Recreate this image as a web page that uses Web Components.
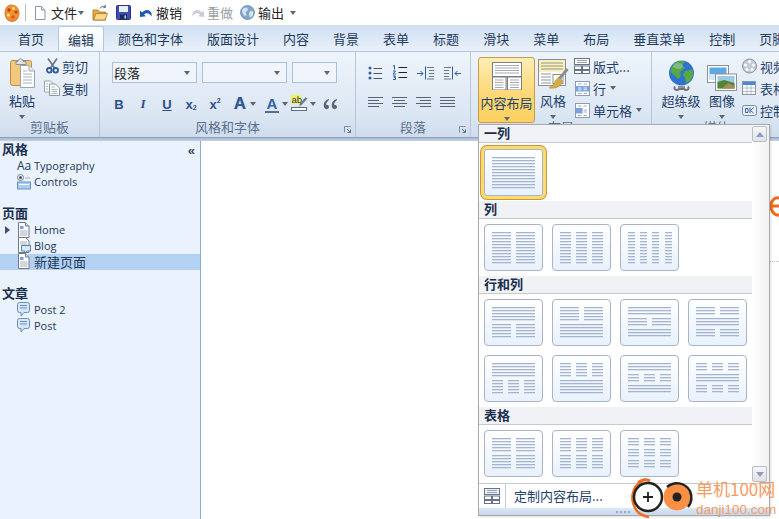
<!DOCTYPE html>
<html lang="zh"><head><meta charset="utf-8"><title>Layout</title>
<style>
html,body{margin:0;padding:0;width:779px;height:519px;overflow:hidden;background:#fff}
body{font:13px "Noto Sans CJK SC","Noto Sans",sans-serif;color:#1e395b}
</style></head><body>
<app-shell></app-shell>
<script>
const ICONS={
logo:[16,20,'<path d="M7 2C3 2 1 6 1 10.500C1 15 4 18.500 8 18.500C12 18.500 15 15 15 10C15 5.500 12 2 7 2Z" fill="#f0922e" stroke="#b8651c" stroke-width=".7"/><circle cx="5" cy="7" r="1.700" fill="#d8301e"/><circle cx="9.500" cy="5.500" r="1.500" fill="#fbe36a"/><circle cx="12" cy="9" r="1.600" fill="#d8301e"/><circle cx="4.500" cy="12" r="1.600" fill="#fbe36a"/><circle cx="9" cy="14" r="1.800" fill="#e4551f"/>'],
doc:[12,16,'<path d="M1.500 1.500H7.500L11 5V14.500H1.500Z" fill="#fff" stroke="#8b97a8"/><path d="M7.500 1.500V5H11" fill="#e3e8ef" stroke="#8b97a8"/>'],
folder:[16,18,'<path d="M1 16V6H6L7.500 8H13.500V16Z" fill="#e8a93e" stroke="#a9731e" stroke-width=".8"/><path d="M1.500 16L4 9.500H15.500L13 16Z" fill="#fbd98b" stroke="#a9731e" stroke-width=".8"/><path d="M8 4.500C9 2.500 11 2 13 2.800M13 .8L13.600 3.200L11.200 3.800" fill="none" stroke="#5f6d82" stroke-width="1"/>'],
save:[15,15,'<rect x=".5" y=".5" width="14" height="14" rx="1" fill="#3f4fb4" stroke="#2a347f"/><rect x="3" y="1" width="9" height="6" fill="#e9edf8"/><rect x="4" y="9.500" width="7" height="5" fill="#20295f"/><rect x="8.500" y="10.500" width="1.500" height="3" fill="#cfd6ee"/>'],
undo:[14,11,'<path d="M3 5.500C6 2 11 2 12.500 6.500C12.800 7.500 12.700 8.500 12.300 9.500C11.500 6.500 7.500 4.800 5 7.500L7 9.200L1 10V3.500L3 5.500Z" fill="#1d59ad"/>'],
redo:[14,11,'<path d="M11 5.500C8 2 3 2 1.500 6.500C1.200 7.500 1.300 8.500 1.700 9.500C2.500 6.500 6.500 4.800 9 7.500L7 9.200L13 10V3.500L11 5.500Z" fill="#c9ced5"/>'],
globeS:[15,15,'<circle cx="7.500" cy="7.500" r="7" fill="#7fa7cf" stroke="#687f9c" stroke-width=".7"/><path d="M3 3.500L7 2.500L8 5L5.500 7L6.500 10L4.500 11L2 7ZM10 6L13.500 6.500L12.500 11L10 12.500L9 9Z" fill="#dbe5ee"/>'],
paste:[25,31,'<rect x=".5" y="3.500" width="21" height="25" rx="2" fill="#f4c87c" stroke="#b98d4e"/><path d="M6 4.500H8C8 1 13 1 13 4.500H16V7.500H6Z" fill="#dfe3e7" stroke="#8a8f97"/><path d="M10.500 8.500H19L24.500 14V30.500H10.500Z" fill="#fff" stroke="#9aa3ae"/><path d="M19 8.500V14H24.500" fill="#e6eaee" stroke="#9aa3ae"/><path d="M13 14H17M13 17H22M13 20H22M13 23H22M13 26H22" stroke="#aab2bd"/>'],
scissors:[13,16,'<path d="M2 .5L8.500 10M11 .5L4.500 10" stroke="#6d7786" stroke-width="1.700"/><circle cx="3.300" cy="12.300" r="2.300" fill="none" stroke="#2c5aa0" stroke-width="1.800"/><circle cx="9.700" cy="12.300" r="2.300" fill="none" stroke="#2c5aa0" stroke-width="1.800"/>'],
copy:[16,16,'<path d="M.5 1H6.500L9.500 4V12H.5Z" fill="#fff" stroke="#98a1ad"/><path d="M5.500 4H11.500L15.500 8V15.500H5.500Z" fill="#fff" stroke="#8d96a3"/><path d="M7.500 7H11M7.500 9.500H13.500M7.500 11.500H13.500M7.500 13.500H13.500M2 4H4M2 6.500H4M2 9H4" stroke="#aeb5bf"/>'],
bullets:[14,14,'<circle cx="2" cy="2" r="1.500" fill="#2d5da8"/><circle cx="2" cy="7" r="1.500" fill="#2d5da8"/><circle cx="2" cy="12" r="1.500" fill="#2d5da8"/><path d="M5.500 2.500H14M5.500 7.500H14M5.500 12.500H14" stroke="#4a5668"/>'],
numbers:[15,15,'<path d="M6.500 2.500H15M6.500 7.500H15M6.500 12.500H15" stroke="#222"/><path d="M1 1L2.500 .5V4.500M1 6H3.500L1 9H4M1 11H3.500L2 12.500H3.500V14.500H1" fill="none" stroke="#2d5da8"/>'],
outdent:[17,14,'<path d="M8.500 .5V13.500" stroke="#2d5da8"/><path d="M0 7.500H6M3.500 5L6 7.500L3.500 10" fill="none" stroke="#2d5da8"/><path d="M10 1.500H17M12 4.500H17M12 7.500H17M12 10.500H17M10 13H17" stroke="#6d7686"/>'],
indent:[17,14,'<path d="M8.500 .5V13.500" stroke="#2d5da8"/><path d="M11 7.500H17M13.500 5L11 7.500L13.500 10" fill="none" stroke="#2d5da8"/><path d="M0 1.500H7M0 4.500H5M0 7.500H5M0 10.500H5M0 13H7" stroke="#6d7686"/>'],
alignL:[15,11,'<path d="M0 .5H15M0 3.500H11M0 6.500H15M0 9.500H11" stroke="#56647a" stroke-width="1.100"/>'],
alignC:[15,11,'<path d="M0 .5H15M2 3.500H13M0 6.500H15M2 9.500H13" stroke="#56647a" stroke-width="1.100"/>'],
alignR:[15,11,'<path d="M0 .5H15M4 3.500H15M0 6.500H15M4 9.500H15" stroke="#56647a" stroke-width="1.100"/>'],
alignJ:[15,11,'<path d="M0 .5H15M0 3.500H15M0 6.500H15M0 9.500H15" stroke="#56647a" stroke-width="1.100"/>'],
quote:[15,11,'<path d="M6 0C2 1 0 4 1 8C1.500 10.500 5 11 6 8.500C6.500 6.500 4 5 3 6C3 4 4.500 2 6 1ZM14 0C10 1 8 4 9 8C9.500 10.500 13 11 14 8.500C14.500 6.500 12 5 11 6C11 4 12.500 2 14 1Z" fill="#5a6778"/>'],
launch:[7,7,'<path d="M.5 6.500V.5H6.500" fill="none" stroke="#8090a6"/><path d="M3 3L6.500 6.500M6.500 3.500V6.500H3.500" fill="none" stroke="#5e7391"/>'],
bigLayout:[30,28,'<rect x=".5" y=".5" width="29" height="14" fill="#fff" stroke="#7c7f86"/><rect x=".5" y="15" width="13.500" height="13" fill="#fff" stroke="#7c7f86"/><rect x="15.500" y="15" width="14" height="13" fill="#fff" stroke="#7c7f86"/><path d="M3 3.500H27M3 6H27M3 8.500H27M3 11H27M3 18H11.500M3 20.500H11.500M3 23H11.500M3 25.500H11.500M18 18H27M18 20.500H27M18 23H27M18 25.500H27" stroke="#a5a9b2"/>'],
style:[31,32,'<rect x=".5" y=".5" width="27" height="26" fill="#fff" stroke="#8a8d93"/><rect x="1" y="1" width="26" height="12" fill="#fbf0b5"/><path d="M3 4H25M3 7H25M3 10H25M3 15H13M3 18H13M3 21H13M3 24H13" stroke="#8f959e"/><rect x="15" y="15.500" width="10" height="9" fill="#fff" stroke="#8a8d93"/><path d="M29.500 10L21 20" stroke="#8a8d93" stroke-width="3"/><path d="M21 19C16 20 18 25 11 29C18 30 25 27 24 21Z" fill="#d6ad45" stroke="#a98226" stroke-width=".5"/>'],
fmt:[16,16,'<rect x=".5" y=".5" width="15" height="6" fill="#fff" stroke="#677488"/><rect x=".5" y="8" width="7" height="3.500" fill="#fff" stroke="#677488"/><rect x="8.500" y="8" width="7" height="3.500" fill="#fff" stroke="#677488"/><rect x=".5" y="12.500" width="7" height="3" fill="#fff" stroke="#677488"/><rect x="8.500" y="12.500" width="7" height="3" fill="#fff" stroke="#677488"/><path d="M3 2.500H13M3 4.500H13" stroke="#9aa3b1"/>'],
row:[15,15,'<rect x=".5" y=".5" width="14" height="14" fill="#fff" stroke="#8f9db3"/><rect x="1" y="5" width="13" height="5.500" fill="#7da0df"/><path d="M3 7H6.500M8.500 7H12M3 8.800H6.500M8.500 8.800H12" stroke="#e6edfa"/><path d="M3 3H6.500M8.500 3H12M3 12.500H6.500M8.500 12.500H12" stroke="#a3aebf"/>'],
cell:[15,15,'<rect x=".5" y=".5" width="14" height="14" fill="#fff" stroke="#8f9db3"/><rect x="1" y="5" width="6.500" height="5.500" fill="#7da0df"/><path d="M3 3H6.500M8.500 3H12M8.500 7H12M8.500 9H12M3 12.500H6.500M8.500 12.500H12" stroke="#a3aebf"/>'],
globe:[27,31,'<path d="M7 26.500C5 29.500 9 31 11 29L16 29C18 31 22 29.500 20 26.500" fill="none" stroke="#6d7078" stroke-width="2"/><path d="M10 27H17" stroke="#8d9097" stroke-width="2"/><circle cx="13.500" cy="13" r="12.500" fill="#2f73cf"/><path d="M5 5C8 1 14 0 17 2L14 5L17 8L12 12L13 16L10 19L6 15L2.500 12C2.500 9 3.500 7 5 5ZM17 11L24 9.500C26 13 25 18 22 21L18 23L17 18L15 15Z" fill="#58a843"/><ellipse cx="10" cy="6" rx="5" ry="3" fill="#bfe0ff" opacity=".35"/>'],
image:[30,26,'<rect x=".5" y=".5" width="21" height="17" fill="#fff" stroke="#8b9099"/><rect x="2.500" y="2.500" width="17" height="12" fill="#5da8e4"/><rect x="2.500" y="9" width="17" height="6" fill="#d2e7f7"/><rect x="8.500" y="9" width="21" height="16.500" fill="#fff" stroke="#8b9099"/><rect x="10.500" y="11" width="17" height="12.500" fill="#9cc9e6"/><path d="M10.500 17L17 15L27.500 18V23.500H10.500Z" fill="#4f8537"/><path d="M15 23.500L21 18L27.500 21V23.500Z" fill="#a58e4f"/>'],
film:[15,16,'<circle cx="7.500" cy="8" r="7" fill="#c6ccd5" stroke="#8a929e"/><circle cx="7.500" cy="3.800" r="1.500" fill="#fff"/><circle cx="3.500" cy="7" r="1.500" fill="#fff"/><circle cx="11.500" cy="7" r="1.500" fill="#fff"/><circle cx="5" cy="11.500" r="1.500" fill="#fff"/><circle cx="10" cy="11.500" r="1.500" fill="#fff"/>'],
table:[14,14,'<rect x=".5" y=".5" width="13" height="13" fill="#fff" stroke="#8b96a8"/><rect x="1" y="1" width="12" height="3" fill="#4b88d8"/><path d="M1 7H13M1 10.500H13M5 4V13M9 4V13" stroke="#b3bccb"/>'],
ok:[15,11,'<rect x=".5" y=".5" width="14" height="10" rx="2" fill="#e8eef7" stroke="#7a8ba5"/><path d="M3.500 3.500H6V7.500H3.500ZM8 2.500V8M11.500 2.500L8.500 5.500L11.500 8" fill="none" stroke="#3f66a0"/>'],
treeDoc:[13,16,'<path d="M1.500 .5H8.500L12 4V15.500H1.500Z" fill="#fff" stroke="#6e7889"/><path d="M8.500 .5V4H12" fill="#dfe4ec" stroke="#6e7889"/><rect x="3" y="4" width="3.500" height="3" fill="#7da0df"/><path d="M3 9H10.500M3 11H10.500M3 13H10.500" stroke="#a5adba"/>'],
blog:[15,17,'<path d="M1.500 .5H8.500L12 4V15.500H1.500Z" fill="#fff" stroke="#6e7889"/><path d="M3 5H10M3 7H10" stroke="#a5adba"/><path d="M4.500 8.500H13.500V14H10L7.500 16.500V14H4.500Z" fill="#dbe8f8" stroke="#5a7fb2"/>'],
post:[13,15,'<path d="M.5 2.500Q.5 .5 2.500 .5H10.500Q12.500 .5 12.500 2.500V8.500Q12.500 10.500 10.500 10.500H7L4 14V10.500H2.500Q.5 10.500 .5 8.500Z" fill="#d7e6f8" stroke="#6d8fbe"/><path d="M3 3.500H10M3 6H10" stroke="#6d8fbe"/>'],
controls:[14,16,'<circle cx="3.500" cy="3.500" r="3" fill="#fff" stroke="#6e7889"/><circle cx="3.500" cy="3.500" r="1.500" fill="#44536b"/><path d="M8 4H13" stroke="#a8b0bc"/><rect x=".5" y="8" width="13" height="7" fill="#a6cdf2" stroke="#6e92bd"/><path d="M2 10.500H12" stroke="#fff"/>'],
footer:[16,16,'<rect x=".5" y=".5" width="15" height="6" fill="#eef2f8" stroke="#677488"/><rect x=".5" y="8" width="7" height="3.500" fill="#fff" stroke="#677488"/><rect x="8.500" y="8" width="7" height="3.500" fill="#fff" stroke="#677488"/><rect x=".5" y="12.500" width="7" height="3" fill="#fff" stroke="#677488"/><rect x="8.500" y="12.500" width="7" height="3" fill="#fff" stroke="#677488"/><path d="M3 2.500H13M3 4.500H13" stroke="#9aa3b1"/>']
};
function def(name,css,html,ready){
  customElements.define(name,class extends HTMLElement{
    connectedCallback(){
      if(this.shadowRoot)return;
      const s=this.attachShadow({mode:'open'});
      s.innerHTML='<style>'+css+'</style>'+(typeof html==='function'?html(this):html);
      if(ready)ready(this,s);
    }
  });
}
def('ui-icon',':host{display:inline-flex;flex:none}svg{display:block}',h=>{
  const [w,ht,p]=ICONS[h.getAttribute('name')];
  return `<svg xmlns="http://www.w3.org/2000/svg" width="${w}" height="${ht}" viewBox="0 0 ${w} ${ht}">${p}</svg>`;
});
def('ui-caret',':host{display:inline-block;flex:none;width:0;height:0;border:3.500px solid transparent;border-top:4px solid #5b6675;border-bottom:0;margin-left:var(--m,3px)}','');

def('qa-bar',`:host{display:flex;align-items:center;height:25px;background:#fff;flex:none;padding-left:4px;color:#222;white-space:nowrap}
.sep{width:1px;height:17px;background:#b7bdc6;margin:0 8px 0 5px}
.t{margin-left:4px}.g{color:#9a9fa6}`,`
<ui-icon name="logo"></ui-icon><span class="sep"></span>
<ui-icon name="doc"></ui-icon><span class="t" style="margin-left:5px">文件</span><ui-caret style="--m:1px"></ui-caret>
<ui-icon name="folder" style="margin-left:8px"></ui-icon>
<ui-icon name="save" style="margin-left:8px"></ui-icon>
<ui-icon name="undo" style="margin-left:8px"></ui-icon><span class="t" style="margin-left:3px">撤销</span>
<ui-icon name="redo" style="margin-left:9px"></ui-icon><span class="t g" style="margin-left:2px">重做</span>
<ui-icon name="globeS" style="margin-left:7px"></ui-icon><span class="t" style="margin-left:3px">输出</span><ui-caret style="--m:6px"></ui-caret>`);

def('ribbon-tabs',`:host{display:flex;height:27px;flex:none;padding-left:6px;background:linear-gradient(#cfdff0,#e9f1fb);white-space:nowrap;overflow:hidden;box-sizing:border-box;border-bottom:1px solid #b6c8dd}
span{padding:0 12px;line-height:27px;color:#1f3a5d;flex:none}
.a{position:relative;z-index:1;height:27px;box-sizing:border-box;margin:1px 2px -1px 2px;padding:0 9px;border:1px solid #b6c8dd;border-bottom:0;border-radius:3px 3px 0 0;background:linear-gradient(#fff,#eef4fc);line-height:26px}`,
h=>'首页 编辑 颜色和字体 版面设计 内容 背景 表单 标题 滑块 菜单 布局 垂直菜单 控制 页脚'.split(' ').map((t,i)=>`<span class="${i==1?'a':''}">${t}</span>`).join(''));

def('ribbon-group',`:host{display:flex;flex-direction:column;flex:none;box-sizing:border-box;border-right:1px solid #b7c7da;height:85px;position:relative}
.b{flex:1;min-height:0;display:flex}
.l{height:20px;line-height:19px;text-align:center;color:#5b708d;font-size:13px}
ui-icon{position:absolute;right:4px;bottom:4px}`,
h=>`<div class="b"><slot></slot></div><div class="l">${h.getAttribute('label')}</div>${h.hasAttribute('launch')?'<ui-icon name="launch"></ui-icon>':''}`);

def('big-btn',`:host{display:flex;flex-direction:column;align-items:center;flex:none;box-sizing:border-box;height:var(--h,66px);color:#24406a;line-height:18px}
.i{height:var(--ih,32px);display:flex;align-items:flex-end;justify-content:center;margin-top:var(--it,3px)}
.t{margin-top:var(--tt,2px);white-space:nowrap}
ui-caret{margin:5px 0 0}
:host([active]){background:linear-gradient(#fdeeb4,#fdd878 55%,#fbd15f);border:1px solid #c89b4c;border-radius:3px;margin-top:-1px}`,
h=>`<div class="i"><ui-icon name="${h.getAttribute('icon')}"></ui-icon></div><div class="t"><slot></slot></div><ui-caret></ui-caret>`);

def('small-btn',`:host{display:flex;align-items:center;height:22px;white-space:nowrap;color:#24406a;flex:none}
.i{width:var(--iw,16px);display:flex;justify-content:center;margin-right:var(--im,3px)}
ui-caret{--m:4px}`,
h=>`<span class="i"><ui-icon name="${h.getAttribute('icon')}"></ui-icon></span><slot></slot>${h.hasAttribute('caret')?'<ui-caret></ui-caret>':''}`);

def('combo-box',`:host{display:flex;align-items:center;justify-content:space-between;box-sizing:border-box;height:21px;border:1px solid #abc0dc;background:#f0f5fb;padding:0 6px 0 1px;color:#1a1a1a;flex:none}`,
`<span><slot></slot></span><ui-caret></ui-caret>`);

def('font-tool',`:host{display:inline-flex;align-items:center;justify-content:center;flex:none;width:24px;height:18px;color:#2c4f8c;font:bold 13px "Liberation Sans",sans-serif}
::slotted(small){font-size:7px;position:relative}`,`<slot></slot>`);

def('ribbon-bar',`:host{display:flex;height:85px;flex:none;background:linear-gradient(#eef4fb,#dbe6f3 75%,#cfdced);overflow:hidden}
.pa{display:flex;padding:5px 0 0 9px;gap:9px}
.sm{display:flex;flex-direction:column;margin-top:-2px;--im:2px}
.f{padding:10px 0 0 12px;flex-direction:column;display:flex;gap:12px}
.r{display:flex;gap:5px}
.tl{display:flex;align-items:center;margin-left:-5px}
.p{display:flex;flex-direction:column;padding:13px 0 0 12px;gap:17px}
.p .a{display:flex;gap:10px;align-items:center;height:15px}
.p .c{display:flex;gap:9px;align-items:center;height:11px}
.lay{display:flex;padding-top:6px;padding-left:7px}
.rs{margin-top:-3px;padding-left:4px;display:flex;flex-direction:column}
.hl{display:block;flex:none;margin:-2px 0 0 3px}`,`
<ribbon-group label="剪贴板" style="width:100px"><div class="pa">
  <big-btn icon="paste" style="--ih:31px;--it:0;--tt:4px"><span style="display:block;width:26px">粘贴</span></big-btn>
  <div class="sm"><small-btn icon="scissors">剪切</small-btn><small-btn icon="copy">复制</small-btn></div>
</div></ribbon-group>
<ribbon-group label="风格和字体" launch style="width:256px"><div class="f">
  <div class="r"><combo-box style="width:85px">段落</combo-box><combo-box style="width:85px"></combo-box><combo-box style="width:45px"></combo-box></div>
  <div class="r tl" style="gap:0;padding-left:0">
    <font-tool>B</font-tool><font-tool style="font-style:italic;font-family:'Liberation Serif',serif">I</font-tool><font-tool style="text-decoration:underline">U</font-tool>
    <font-tool>x<small style="top:3px">2</small></font-tool><font-tool>x<small style="top:-4px">2</small></font-tool>
    <font-tool style="width:18px;margin-left:4px;font-size:17px;color:#2f5597;text-shadow:0 0 1px #8aa">A</font-tool><ui-caret style="--m:1px"></ui-caret>
    <font-tool style="margin-left:9px;font-size:15px;border-bottom:2px solid #566d8f;height:15px;color:#2f5fa5;width:14px">A</font-tool><ui-caret style="--m:3px"></ui-caret>
    <svg class="hl" width="17" height="16" viewBox="0 0 17 16"><rect width="10" height="9" fill="#f3ee5c"/><text x=".5" y="7.500" font-family="Liberation Sans" font-size="9.500" fill="#2a3a55">ab</text><path d="M15.500 3L9 10" stroke="#6d7b90" stroke-width="2.500"/><path d="M9 10L7 12.500L10 11" fill="#c9a24a"/><rect x=".5" y="12.500" width="15" height="3" fill="#fff" stroke="#566d8f"/></svg><ui-caret style="--m:2px"></ui-caret>
    <ui-icon name="quote" style="margin-left:7px"></ui-icon>
  </div>
</div></ribbon-group>
<ribbon-group label="段落" launch style="width:115px"><div class="p">
  <div class="a"><ui-icon name="bullets"></ui-icon><ui-icon name="numbers"></ui-icon><ui-icon name="outdent"></ui-icon><ui-icon name="indent"></ui-icon></div>
  <div class="c"><ui-icon name="alignL"></ui-icon><ui-icon name="alignC"></ui-icon><ui-icon name="alignR"></ui-icon><ui-icon name="alignJ"></ui-icon></div>
</div></ribbon-group>
<ribbon-group label="布局" style="width:181px"><div class="lay">
  <big-btn active icon="bigLayout" style="width:57px;--ih:30px;--it:2px;--tt:4px">内容布局</big-btn>
  <big-btn icon="style" style="width:34px;margin-left:1px;--ih:32px;--it:1px;--tt:1px">风格</big-btn>
  <div class="rs"><small-btn icon="fmt">版式...</small-btn><small-btn icon="row" caret>行</small-btn><small-btn icon="cell" caret>单元格</small-btn></div>
</div></ribbon-group>
<ribbon-group label="媒体" style="width:130px"><div class="lay" style="padding-left:9px">
  <big-btn icon="globe" style="width:40px;--ih:33px;--it:0;--tt:1px">超练级</big-btn>
  <big-btn icon="image" style="width:30px;margin-left:6px;--ih:31px;--it:2px;--tt:1px">图像</big-btn>
  <div class="rs"><small-btn icon="film">视频</small-btn><small-btn icon="table">表格</small-btn><small-btn icon="ok">控制</small-btn></div>
</div></ribbon-group>`);

def('tree-row',`:host{display:flex;align-items:center;box-sizing:border-box;height:16px;padding:0 0 1px 17px;color:#1e395b;white-space:nowrap;position:relative;font:11px "Open Sans",sans-serif}
:host([selected]){background:#b3d2f3;font:13px "Noto Sans CJK SC",sans-serif;padding-bottom:2px}
.i{width:17px;display:flex;align-items:center;flex:none}
.arrow{position:absolute;left:5px;top:4px;width:0;height:0;border:4px solid transparent;border-left:5px solid #3f536d;border-right:0}`,
h=>`${h.hasAttribute('arrow')?'<span class="arrow"></span>':''}<span class="i">${h.hasAttribute('aa')?'<span style="font-size:12px;letter-spacing:0">Aa</span>':`<ui-icon name="${h.getAttribute('icon')}"></ui-icon>`}</span><slot></slot>`);

def('side-panel',`:host{display:block;width:201px;box-sizing:border-box;flex:none;background:#e9f2fd;border-right:1px solid #8ea7ca;position:relative}
h3{margin:0 0 1px;font:bold 13px "Noto Sans CJK SC",sans-serif;color:#1a2f4e;height:16px;line-height:15px;padding-left:2px}
.s{margin-bottom:15px}.fold{position:absolute;right:6px;top:2px;font:bold 13px "Liberation Sans",sans-serif;color:#33475f;letter-spacing:-1px}`,`
<span class="fold">«</span>
<div class="s"><h3>风格</h3><tree-row aa>Typography</tree-row><tree-row icon="controls">Controls</tree-row></div>
<div class="s"><h3>页面</h3><tree-row icon="treeDoc" arrow>Home</tree-row><tree-row icon="blog">Blog</tree-row><tree-row icon="treeDoc" selected>新建页面</tree-row></div>
<div class="s"><h3>文章</h3><tree-row icon="post">Post 2</tree-row><tree-row icon="post">Post</tree-row></div>`);

const L={
 one:[[8,11,1]],c2:[[8,11,2]],c3:[[8,11,3]],c4:[[8,11,4]],
 a1:[[8,5,1],[25,5,2]],a2:[[8,5,2],[25,5,1]],a3:[[8,3,1],[19,3,2],[30,3,1]],a4:[[8,3,2],[19,3,1],[30,3,2]],
 b1:[[8,5,1],[25,5,3]],b2:[[8,5,3],[25,5,1]],b3:[[8,3,1],[19,3,3],[30,3,1]],b4:[[8,3,3],[19,3,1],[30,3,3]],
 t1:[[8,5,2],[25,5,2]],t2:[[8,5,3],[25,5,3]],t3:[[8,3,3],[19,3,3],[30,3,3]]
};
const COLS={1:[[8,43]],2:[[8,19],[32,19]],3:[[8,11],[24,11],[40,11]],4:[[8,7],[20,7],[32,7],[45,7]]};
def('layout-thumb',`:host{display:block;flex:none;width:59px;height:47px;box-sizing:border-box;border:1px solid #a9b4c8;border-radius:4px;background:linear-gradient(#fff,#e8f1fd)}
svg{display:block;margin:-1px}
:host([selected]){box-shadow:0 0 0 3px #fdd96f,0 0 0 4px #c8963c;border-radius:3px}`,
h=>{let r='';for(const [y,n,c] of L[h.getAttribute('kind')])for(let i=0;i<n;i++)for(const [x,w] of COLS[c])r+=`<rect x="${x}" y="${y+i*3}" width="${w}" height="1.300" fill="#a5b5d1"/>`;
 return `<svg xmlns="http://www.w3.org/2000/svg" width="59" height="47">${r}</svg>`;});

def('gal-sec',`:host{display:block}
h4{margin:0;padding-left:5px;background:#f0f2f5;border-bottom:1px solid #c6c9ce;font:bold 13px "Noto Sans CJK SC",sans-serif;color:#1a2f4e;height:17px;line-height:16px}
.g{display:grid;grid-template-columns:repeat(4,59px);gap:9px;padding:var(--pt,5px) 0 var(--pb,5px) 5px}`,
h=>`<h4>${h.getAttribute('title')}</h4><div class="g"><slot></slot></div>`);

def('layout-popup',`:host{position:absolute;left:478px;top:124px;width:292px;height:392px;box-sizing:border-box;border:1px solid #a6a9ae;background:#fff;display:flex;flex-direction:column;z-index:5;box-shadow:1px 1px 2px rgba(0,0,0,.12)}
.top{flex:1;min-height:0;display:flex}
.list{width:273px;flex:none}
.sb{flex:1;display:flex;flex-direction:column;justify-content:space-between;background:linear-gradient(90deg,#fff,#f1f1f1);padding:1px 2px 1px 0;box-sizing:border-box}
.ar{width:15px;height:16px;box-sizing:border-box;border:1px solid #b9bdc4;border-radius:2px;background:linear-gradient(#f6f7f9,#dfe2e8);display:flex;align-items:center;justify-content:center}
.up{width:0;height:0;border:4px solid transparent;border-top:0;border-bottom:5px solid #8b9cc0}
.dn{width:0;height:0;border:4px solid transparent;border-bottom:0;border-top:5px solid #8b9cc0}
.foot{flex:none;height:25px;border-top:1px solid #c6c9ce;display:flex;align-items:center;color:#24406a;background:#fff;box-sizing:border-box}
.fi{width:27px;height:100%;display:flex;align-items:center;justify-content:center;border-right:1px solid #c6c9ce;box-sizing:border-box;margin-right:8px}
.ft{margin-top:-2px}
.grip{height:7px;flex:none;background:linear-gradient(#dbe8f6,#c6d8ec);display:flex;justify-content:center;align-items:center}
.grip i{width:16px;height:2px;background:repeating-linear-gradient(90deg,#98a7bb 0 2px,transparent 2px 4px)}`,`
<div class="top"><div class="list">
<gal-sec title="一列" style="--pt:6px;--pb:5px"><layout-thumb selected kind="one"></layout-thumb></gal-sec>
<gal-sec title="列"><layout-thumb kind="c2"></layout-thumb><layout-thumb kind="c3"></layout-thumb><layout-thumb kind="c4"></layout-thumb></gal-sec>
<gal-sec title="行和列"><layout-thumb kind="a1"></layout-thumb><layout-thumb kind="a2"></layout-thumb><layout-thumb kind="a3"></layout-thumb><layout-thumb kind="a4"></layout-thumb><layout-thumb kind="b1"></layout-thumb><layout-thumb kind="b2"></layout-thumb><layout-thumb kind="b3"></layout-thumb><layout-thumb kind="b4"></layout-thumb></gal-sec>
<gal-sec title="表格"><layout-thumb kind="t1"></layout-thumb><layout-thumb kind="t2"></layout-thumb><layout-thumb kind="t3"></layout-thumb></gal-sec>
</div><div class="sb"><div class="ar"><span class="up"></span></div><div class="ar"><span class="dn"></span></div></div></div>
<div class="foot"><span class="fi"><ui-icon name="footer"></ui-icon></span><span class="ft">定制内容布局...</span></div>
<div class="grip"><i></i></div>`);

def('water-mark',`:host{position:absolute;left:630px;top:478px;width:149px;height:41px;z-index:9;display:flex;pointer-events:none}
svg{flex:none;display:block}
.t{color:#f79a5f;display:flex;flex-direction:column;white-space:nowrap}
.a{font:17px/22px "Noto Sans CJK SC",sans-serif}
.b{font:13.500px/19px "Liberation Sans",sans-serif}`,`
<svg width="66" height="41" viewBox="0 0 66 41"><path d="M12 4C2 8-1 22 7 33C10 37 14 38 19 39" fill="none" stroke="#f06a1f" stroke-width="2.500"/><path d="M8 5C12 1 17 1 20 3" fill="none" stroke="#f06a1f" stroke-width="3"/><circle cx="18" cy="19" r="14" fill="#fff" stroke="#222" stroke-width="2.500"/><path d="M13 19H23M18 14V24" stroke="#222" stroke-width="1.800"/><circle cx="47" cy="19" r="13.500" fill="#fb8f43"/><path d="M37 9C44 3 55 4 60 13C62 18 62 24 58 29" fill="none" stroke="#222" stroke-width="2.500"/><circle cx="47" cy="19" r="4.500" fill="#222"/></svg>
<div class="t"><span class="a">单机100网</span><span class="b">danji100.com</span></div>`);

def('app-shell',`:host{display:flex;flex-direction:column;width:779px;height:519px;position:relative;overflow:hidden;background:#fff}
.bar{height:4px;flex:none;background:linear-gradient(#a9bad0,#c3d0e0);border-top:1px solid #8da2bf;box-sizing:border-box}
.main{flex:1;min-height:0;display:flex}
.canvas{flex:1;position:relative;overflow:hidden}
.e{position:absolute;left:569px;top:55px}
.dash{position:absolute;left:569px;right:0;top:120px;border-top:1px dotted #b9c0ca}`,`
<qa-bar></qa-bar><ribbon-tabs></ribbon-tabs><ribbon-bar></ribbon-bar><div class="bar"></div>
<div class="main"><side-panel></side-panel><div class="canvas">
<svg class="e" width="10" height="22" viewBox="0 0 10 22"><path d="M10 2C4 1 1 5 1 10C1 16 5 20 10 19M1 10H10" fill="none" stroke="#f26a1c" stroke-width="3"/></svg>
<div class="dash"></div>
</div></div>
<layout-popup></layout-popup><water-mark></water-mark>`);
</script>
</body></html>
